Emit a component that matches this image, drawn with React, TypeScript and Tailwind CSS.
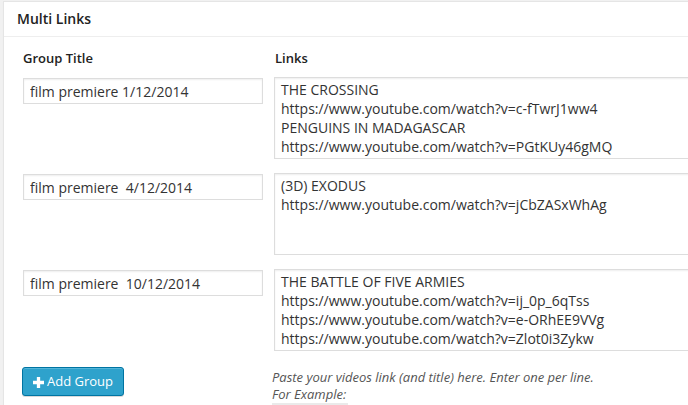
import React from "react";

const rows = [
  {
    title: "film premiere 1/12/2014",
    links:
      "THE CROSSING\nhttps://www.youtube.com/watch?v=c-fTwrJ1ww4\nPENGUINS IN MADAGASCAR\nhttps://www.youtube.com/watch?v=PGtKUy46gMQ",
  },
  {
    title: "film premiere  4/12/2014",
    links: "(3D) EXODUS\nhttps://www.youtube.com/watch?v=jCbZASxWhAg",
  },
  {
    title: "film premiere  10/12/2014",
    links:
      "THE BATTLE OF FIVE ARMIES\nhttps://www.youtube.com/watch?v=ij_0p_6qTss\nhttps://www.youtube.com/watch?v=e-ORhEE9VVg\nhttps://www.youtube.com/watch?v=Zlot0i3Zykw",
  },
];

export default function App() {
  return (
    <div
      className="w-[688px] h-[405px] overflow-hidden bg-[#f1f1f1] pt-[1px] pl-[3px]"
      style={{ fontFamily: '"Open Sans", "Noto Sans", sans-serif' }}
    >
      <div className="w-[760px] h-[420px] bg-white border border-[#e5e5e5] shadow-[0_1px_1px_rgba(0,0,0,0.04)]">
        <div className="h-[35px] border-b border-[#eeeeee] pl-[13px] flex items-center">
          <h3 className="text-[14px] font-semibold text-[#222222] leading-none">Multi Links</h3>
        </div>
        <div className="pl-[19px] pt-[12px]">
          <div className="flex text-[13px] font-semibold text-[#222222] leading-[18px]">
            <div className="w-[252px]">Group Title</div>
            <div>Links</div>
          </div>
          <div className="mt-[10px] flex flex-col gap-[14px]">
            {rows.map((r, i) => (
              <div key={i} className="flex items-start">
                <input
                  readOnly
                  value={r.title}
                  className="mt-[1px] w-[240px] h-[26px] border border-[#dddddd] shadow-[inset_0_1px_2px_rgba(0,0,0,0.07)] px-[6px] text-[14px] text-[#333333] outline-none bg-white whitespace-pre"
                  style={{ fontFamily: '"Open Sans", "Noto Sans", sans-serif' }}
                />
                <textarea
                  readOnly
                  value={r.links}
                  className="ml-[11px] w-[460px] h-[82px] border border-[#dddddd] shadow-[inset_0_1px_2px_rgba(0,0,0,0.07)] px-[6px] pt-[2px] text-[14px] leading-[19px] text-[#333333] outline-none resize-none overflow-hidden bg-white"
                  style={{ fontFamily: '"Open Sans", "Noto Sans", sans-serif' }}
                />
              </div>
            ))}
          </div>
          <div className="mt-[15px] flex items-start">
            <div className="w-[249px]">
              <button className="mt-[1px] -ml-[1px] h-[29px] px-[10px] rounded-[3px] bg-[#2ea2cc] border border-[#0074a2] text-white text-[13px] flex items-center gap-[3px] shadow-[inset_0_1px_0_rgba(120,200,230,0.5),0_1px_0_rgba(0,0,0,0.15)]">
                <svg width="11" height="11" viewBox="0 0 10 10" className="mt-[1px]">
                  <path d="M3.5 0h3v3.5H10v3H6.5V10h-3V6.5H0v-3h3.5z" fill="white" />
                </svg>
                <span>Add Group</span>
              </button>
            </div>
            <div className="mt-[3px] text-[13px] italic text-[#555555] leading-[17px]">
              <div>Paste your videos link (and title) here. Enter one per line.</div>
              <div>For Example:</div>
              <div className="w-[76px] h-[4px] bg-[#eaeaea]" />
            </div>
          </div>
        </div>
      </div>
    </div>
  );
}
